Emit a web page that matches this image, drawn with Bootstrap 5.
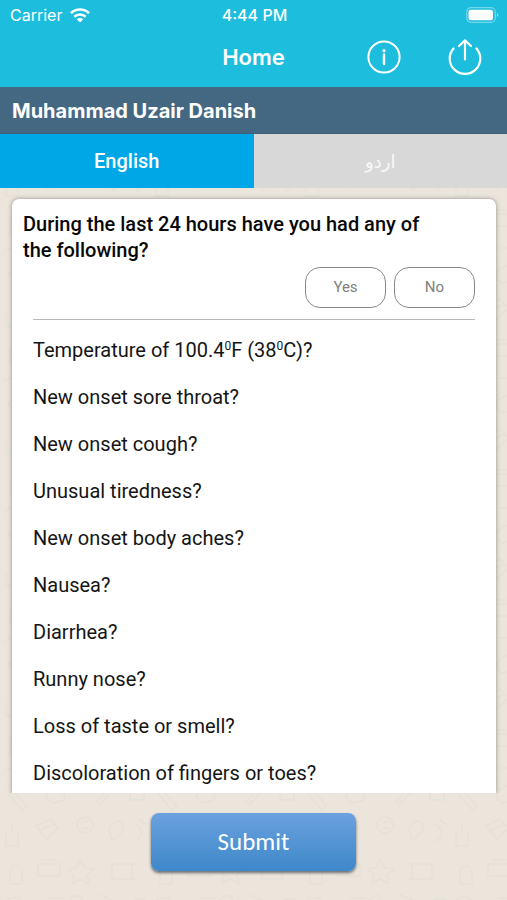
<!DOCTYPE html>
<html lang="en">
<head>
<meta charset="utf-8">
<meta name="viewport" content="width=device-width, initial-scale=1">
<title>Home</title>
<link href="https://cdn.jsdelivr.net/npm/bootstrap@5.3.0/dist/css/bootstrap.min.css" rel="stylesheet">
<style>
body { font-family: Roboto, "Liberation Sans", sans-serif; background: #ece5dc; color: #151515; }
.app { position: relative; z-index: 0; }
.doodles { position: absolute; inset: 0; z-index: -1; }
.app-top { background: #1cbddd; font-family: Inter, "Liberation Sans", sans-serif; }
.status { height: 30px; font-size: 16px; line-height: 30px; padding: 0 8px 0 10px; }
.clock { font-weight: 500; }
.title-bar { height: 57px; padding: 0 24px 3px; }
.title-bar h1 { font-size: 22px; line-height: 28px; font-weight: 600; }
.icon-btn { line-height: 0; background: none; }
.user-bar { background: #456882; border-bottom: 1px solid #3d6078; font: 700 20px/46px Inter, "Liberation Sans", sans-serif; padding: 1px 12px 0; height: 47px; }
.lang { height: 54px; font-size: 20px; font-weight: 500; background: #d8d8d8; color: #fff; }
.lang.active { background: #00a7e7; }
.urdu { font-family: "DejaVu Sans", sans-serif; font-weight: 400; font-size: 18px; opacity: .85; }
.sheet { margin: 11px 11px 0 12px; padding: 12px 21px 0 11px; border-radius: 7px 7px 0 0; box-shadow: 0 0 4px rgba(90, 80, 70, .6); clip-path: inset(-6px -6px 0 -6px); }
.question { font-size: 20px; line-height: 26px; font-weight: 500; color: #080808; padding-right: 32px; }
.answer { width: 81px; height: 41px; border: 1px solid #888; border-radius: 15px; color: #808080; background: #fff; font-size: 15px; }
.btn-check:checked + .answer { background: #e4f3fa; }
.symptoms { margin: 11px 0 0 10px; padding: 7px 0 7px; border-top: 1px solid #b9b9b9; font-size: 20px; line-height: 25px; }
.symptoms li { padding: 11px 0; }
.symptoms li:last-child { padding-bottom: 0; }
.symptoms sup { font-size: 12px; line-height: 0; top: -7px; vertical-align: baseline; }
.submit { width: 205px; height: 58px; margin: 20px 0 29px; border-radius: 8px; color: #fff; font: 400 25px/58px Carlito, Lato, sans-serif; background: linear-gradient(#6ba1de, #3e88ca); box-shadow: 0 2px 3px rgba(50, 60, 70, .7); }
</style>
<script src="https://cdn.jsdelivr.net/npm/bootstrap@5.3.0/dist/js/bootstrap.bundle.min.js"></script>
</head>
<body>
<div class="app min-vh-100 d-flex flex-column">
  <svg class="doodles w-100 h-100" aria-hidden="true">
    <defs>
      <pattern id="doodle" width="150" height="130" patternUnits="userSpaceOnUse">
        <g fill="none" stroke="#d8d2c6" stroke-opacity=".28" stroke-width="1.6" stroke-linecap="round">
          <path d="M8 14l14 16 5-4L13 11zM48 10l10-5 7 6-1 9-12 3-6-6zM96 22l16-18M99 25l16-17M130 8h14v12h-14zM132 12h10"/>
          <circle cx="85" cy="45" r="8"/><path d="M83 42h4M82 48h6M6 52v14h12V52M12 52v-6M36 46l14-7 8 9-11 11zM40 50l13-5M112 44c6-6 12-2 11 4s-8 10-10 12c-3-4-6-12-1-16zM136 45c7 3 8 12 0 16M140 40l6 4"/>
          <path d="M10 92c0-8 12-8 12 0v12H10zM38 84h22v12H38zM42 80h14M80 80l5 8 9 1-7 6 2 9-9-5-8 5 2-9-6-6 8-1zM110 84h25M112 84v14M132 84v14M110 99h24"/>
          <path d="M4 122c8-7 16-5 19 0M50 118h14M70 120c4-6 10-6 13 0M100 115l14 6M134 119h12"/>
        </g>
      </pattern>
    </defs>
    <rect width="100%" height="100%" fill="url(#doodle)"/>
  </svg>

  <header class="app-top text-white">
    <div class="status row g-0 align-items-center">
      <div class="col d-flex align-items-center gap-2">
        <span>Carrier</span>
        <svg width="20" height="15" viewBox="0 0 20 15" fill="none" stroke="#fff" stroke-width="2.6" aria-label="Wi-Fi"><path d="M1 5.2C6 .3 14 .3 19 5.2M4.300 8.800C7.600 5.800 12.400 5.800 15.700 8.800"/><path d="M10 14.500l-3.200-3.200c1.800-1.700 4.600-1.700 6.400 0z" fill="#fff" stroke="none"/></svg>
      </div>
      <div class="col-auto clock">4:44 PM</div>
      <div class="col d-flex justify-content-end">
        <svg width="33" height="16" viewBox="0 0 33 16" aria-label="Battery"><rect x=".7" y=".7" width="28.6" height="14.6" rx="4.5" fill="none" stroke="#fff" stroke-opacity=".4" stroke-width="1.2"/><rect x="2.5" y="2.7" width="24.5" height="10.6" rx="2.5" fill="#fff"/><path d="M31 6c1.800.6 1.800 3.400 0 4z" fill="#fff" fill-opacity=".5"/></svg>
      </div>
    </div>
    <div class="title-bar row g-0 align-items-center">
      <div class="col"></div>
      <h1 class="col-auto mb-0">Home</h1>
      <div class="col d-flex justify-content-end">
        <div class="d-flex justify-content-between flex-fill ms-5 ps-4">
          <button type="button" class="icon-btn border-0 p-0 ms-2" aria-label="Information"><svg width="36" height="38" viewBox="0 0 36 38" fill="none" stroke="#fff" stroke-width="2"><circle cx="19" cy="19" r="15.6"/><path d="M19 16.500V26" stroke-width="2.4" stroke-linecap="round"/><circle cx="19" cy="12.7" r="1.6" fill="#fff" stroke="none"/></svg></button>
          <button type="button" class="icon-btn border-0 p-0" aria-label="Share"><svg width="36" height="38" viewBox="0 0 36 38" fill="none" stroke="#fff" stroke-width="2.2" stroke-linecap="round" stroke-linejoin="round"><path d="M6.500 10.500a15.300 15.300 0 1 0 23 0M18 21.500V3M12 8l6-5.600L24 8"/></svg></button>
        </div>
      </div>
    </div>
  </header>

  <div class="user-bar text-white">Muhammad Uzair Danish</div>

  <nav class="row g-0" aria-label="Language">
    <button type="button" class="lang active col border-0" aria-pressed="true">English</button>
    <button type="button" class="lang col border-0" lang="ur" aria-pressed="false"><span class="urdu">اردو</span></button>
  </nav>

  <main class="flex-grow-1 d-flex flex-column">
    <section class="sheet bg-white flex-grow-1">
      <h2 class="question mb-0">During the last 24 hours have you had any of the following?</h2>
      <div class="d-flex justify-content-end gap-2 mt-1" role="group" aria-label="Answer">
        <input type="radio" class="btn-check" name="answer" id="yes">
        <label class="answer d-flex align-items-center justify-content-center" for="yes">Yes</label>
        <input type="radio" class="btn-check" name="answer" id="no">
        <label class="answer d-flex align-items-center justify-content-center" for="no">No</label>
      </div>
      <ul class="symptoms list-unstyled mb-0">
        <li>Temperature of 100.4<sup>0</sup>F (38<sup>0</sup>C)?</li>
        <li>New onset sore throat?</li>
        <li>New onset cough?</li>
        <li>Unusual tiredness?</li>
        <li>New onset body aches?</li>
        <li>Nausea?</li>
        <li>Diarrhea?</li>
        <li>Runny nose?</li>
        <li>Loss of taste or smell?</li>
        <li>Discoloration of fingers or toes?</li>
      </ul>
    </section>
    <div class="text-center"><button type="submit" class="submit border-0 p-0">Submit</button></div>
  </main>
</div>
</body>
</html>
